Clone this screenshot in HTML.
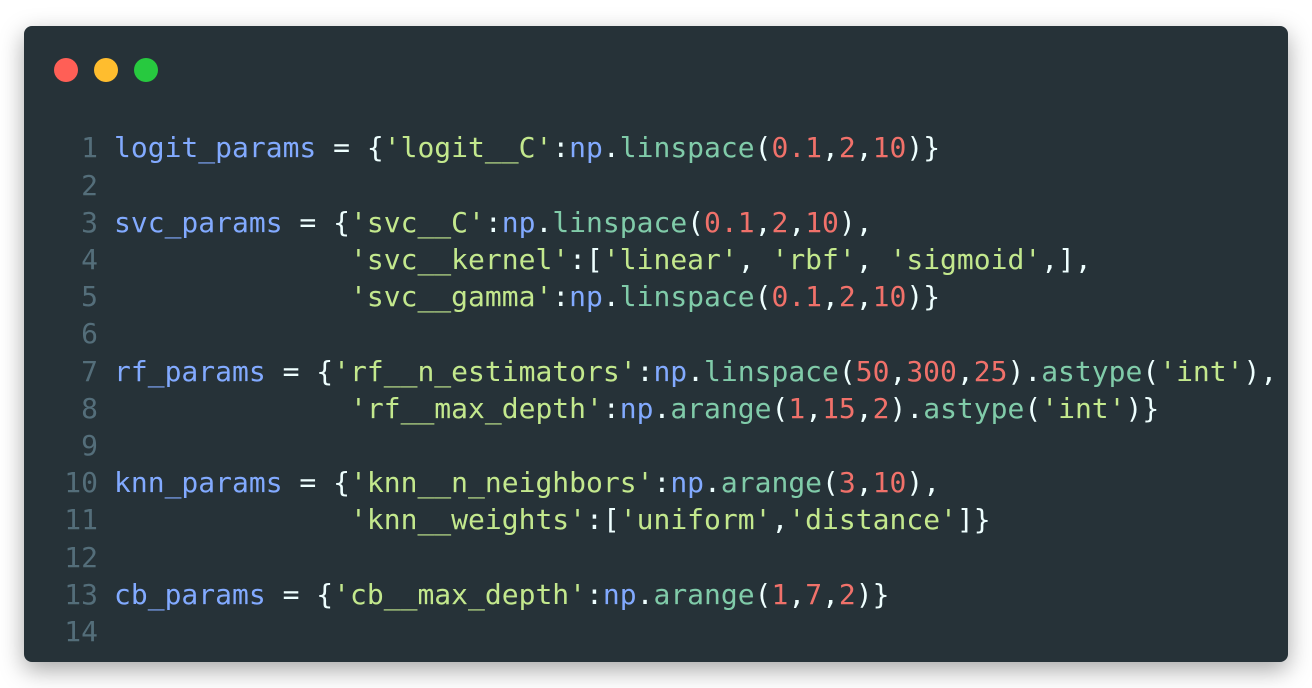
<!DOCTYPE html>
<html><head><meta charset="utf-8"><style>
html,body{margin:0;padding:0;background:#fff;width:1312px;height:688px;overflow:hidden}
.win{position:absolute;left:24px;top:26px;width:1264px;height:636px;background:#263238;border-radius:8px;box-shadow:0 8px 24px rgba(0,0,0,0.35)}
.dot{position:absolute;top:32px;width:24px;height:24px;border-radius:50%}
pre{position:absolute;left:0;top:103.4px;margin:0;font-family:"DejaVu Sans Mono","Liberation Mono",monospace;font-size:28px;line-height:37.2px;color:#eeffff;white-space:pre}
.ln{display:inline-block;width:76px;text-align:right;color:#546e7a;margin-right:16px}
.v{color:#82aaff}.s{color:#c3e88d}.n{color:#f0716a}.f{color:#80cba9}
</style></head><body>
<div class="win">
<div class="dot" style="left:30px;background:#ff5f56"></div>
<div class="dot" style="left:70px;background:#ffbd2e"></div>
<div class="dot" style="left:110px;background:#27c93f"></div>
<pre style="left:-2px"><span class="ln">1</span><span class="v">logit_params</span> = {<span class="s">'logit__C'</span>:<span class="v">np</span>.<span class="f">linspace</span>(<span class="n">0.1</span>,<span class="n">2</span>,<span class="n">10</span>)}
<span class="ln">2</span>
<span class="ln">3</span><span class="v">svc_params</span> = {<span class="s">'svc__C'</span>:<span class="v">np</span>.<span class="f">linspace</span>(<span class="n">0.1</span>,<span class="n">2</span>,<span class="n">10</span>),
<span class="ln">4</span>              <span class="s">'svc__kernel'</span>:[<span class="s">'linear'</span>, <span class="s">'rbf'</span>, <span class="s">'sigmoid'</span>,],
<span class="ln">5</span>              <span class="s">'svc__gamma'</span>:<span class="v">np</span>.<span class="f">linspace</span>(<span class="n">0.1</span>,<span class="n">2</span>,<span class="n">10</span>)}
<span class="ln">6</span>
<span class="ln">7</span><span class="v">rf_params</span> = {<span class="s">'rf__n_estimators'</span>:<span class="v">np</span>.<span class="f">linspace</span>(<span class="n">50</span>,<span class="n">300</span>,<span class="n">25</span>).<span class="f">astype</span>(<span class="s">'int'</span>),
<span class="ln">8</span>              <span class="s">'rf__max_depth'</span>:<span class="v">np</span>.<span class="f">arange</span>(<span class="n">1</span>,<span class="n">15</span>,<span class="n">2</span>).<span class="f">astype</span>(<span class="s">'int'</span>)}
<span class="ln">9</span>
<span class="ln">10</span><span class="v">knn_params</span> = {<span class="s">'knn__n_neighbors'</span>:<span class="v">np</span>.<span class="f">arange</span>(<span class="n">3</span>,<span class="n">10</span>),
<span class="ln">11</span>              <span class="s">'knn__weights'</span>:[<span class="s">'uniform'</span>,<span class="s">'distance'</span>]}
<span class="ln">12</span>
<span class="ln">13</span><span class="v">cb_params</span> = {<span class="s">'cb__max_depth'</span>:<span class="v">np</span>.<span class="f">arange</span>(<span class="n">1</span>,<span class="n">7</span>,<span class="n">2</span>)}
<span class="ln">14</span></pre>
</div>
</body></html>
